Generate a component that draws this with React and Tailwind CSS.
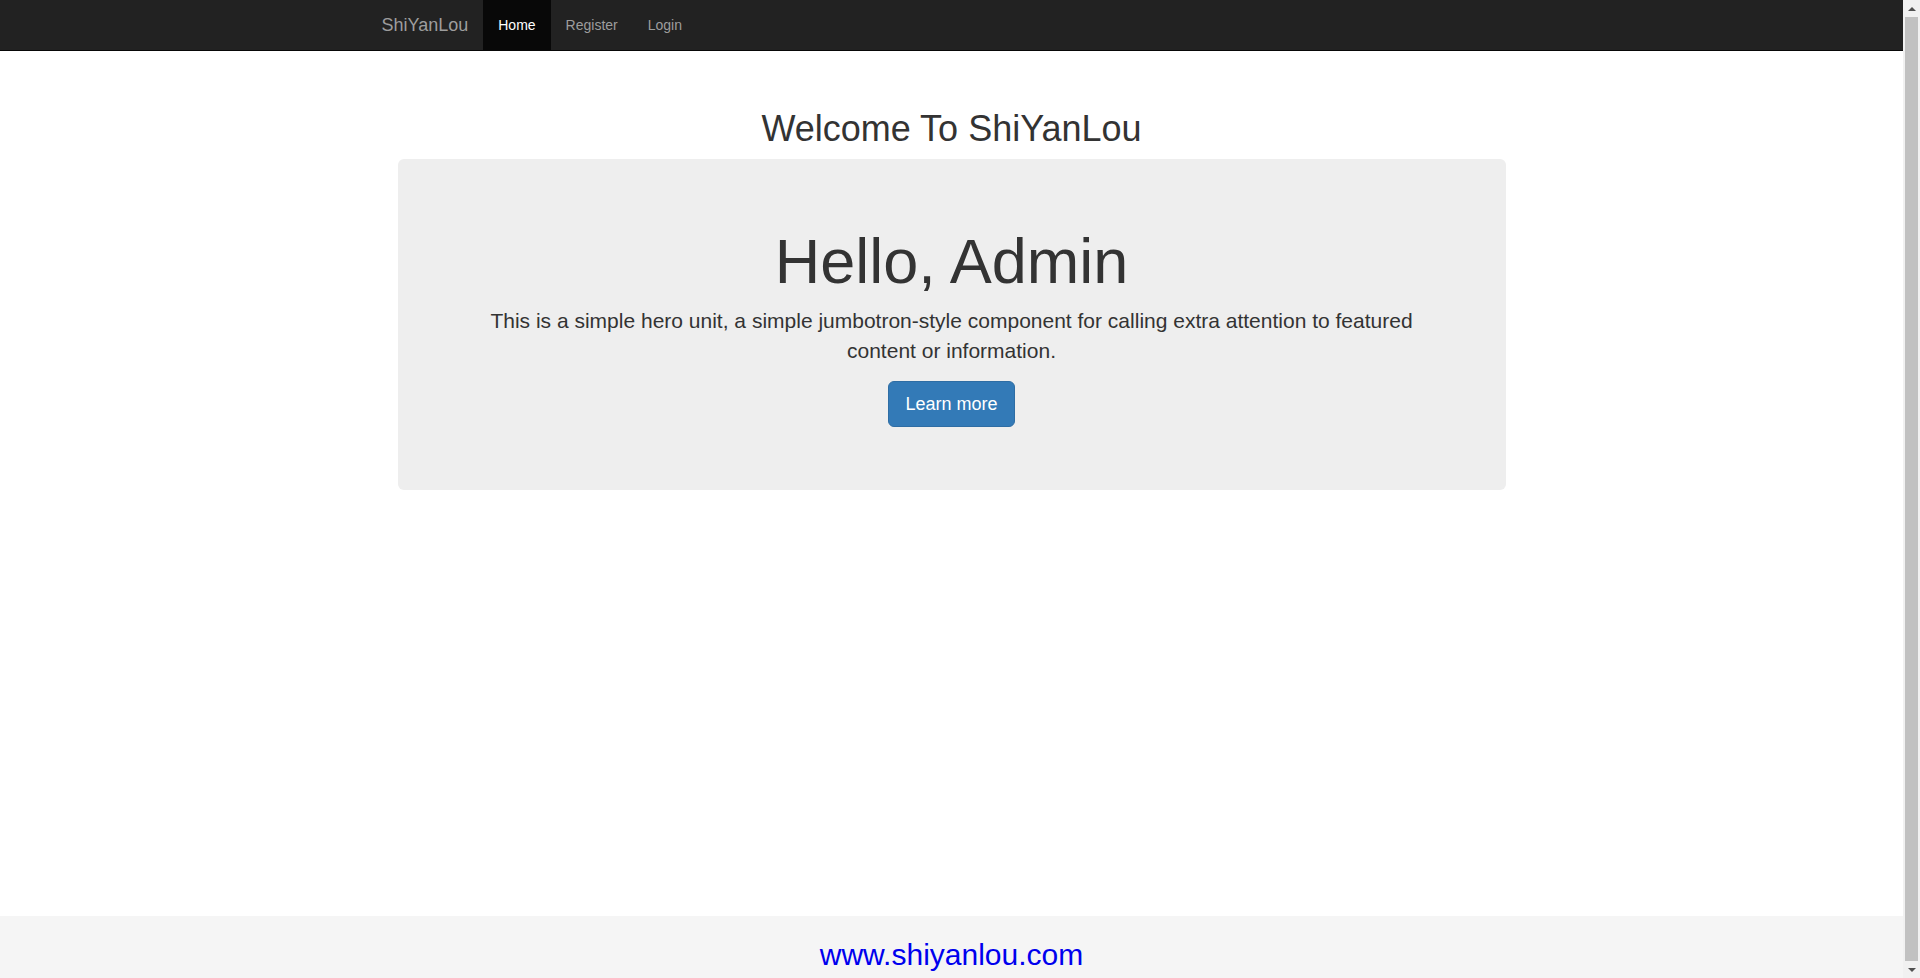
export default function App() {
  return (
    <div
      className="flex h-[978px] w-[1920px] overflow-hidden bg-white text-[#333]"
      style={{ fontFamily: '"Liberation Sans", Arial, sans-serif' }}
    >
      <div className="flex w-[1903px] flex-col">
        <nav className="h-[51px] shrink-0 border-b border-[#080808] bg-[#222]">
          <div className="mx-auto flex h-[50px] w-[1170px]">
            <a className="px-[15px] py-[15px] text-[18px] leading-[20px] text-[#9d9d9d]">ShiYanLou</a>
            <a className="bg-[#080808] px-[15px] py-[15px] text-[14px] leading-[20px] text-white">Home</a>
            <a className="px-[15px] py-[15px] text-[14px] leading-[20px] text-[#9d9d9d]">Register</a>
            <a className="px-[15px] py-[15px] text-[14px] leading-[20px] text-[#9d9d9d]">Login</a>
          </div>
        </nav>

        <main className="flex flex-1 flex-col items-center pt-[58px]">
          <h1 className="text-[36px] font-normal leading-[40px]">Welcome To ShiYanLou</h1>
          <div className="mt-[10px] flex w-[1108px] flex-col items-center rounded-[6px] bg-[#eee] px-[60px] pb-[48px] pt-[68px] text-center">
            <h1 className="text-[63px] font-normal leading-[69px]">Hello, Admin</h1>
            <p className="mt-[10px] text-[21px] font-normal leading-[30px]">
              This is a simple hero unit, a simple jumbotron-style component for calling extra attention to featured content or information.
            </p>
            <p className="mt-[15px] mb-[15px]">
              <a className="inline-block rounded-[6px] border border-[#2e6da4] bg-[#337ab7] px-[16px] py-[10px] text-[18px] leading-[24px] text-white">
                Learn more
              </a>
            </p>
          </div>
        </main>

        <footer className="h-[62px] shrink-0 bg-[#f5f5f5] pt-[19px] text-center">
          <span className="text-[30px] leading-[40px] text-[#0000ee]">www.shiyanlou.com</span>
        </footer>
      </div>

      <div className="flex w-[17px] shrink-0 flex-col bg-[#f1f1f1]">
        <div className="flex h-[17px] items-center justify-center">
          <div className="h-0 w-0 border-x-[4px] border-b-[4px] border-x-transparent border-b-[#505050]" />
        </div>
        <div className="mx-[2px] flex-1 bg-[#c1c1c1]" />
        <div className="flex h-[17px] items-center justify-center">
          <div className="h-0 w-0 border-x-[4px] border-t-[4px] border-x-transparent border-t-[#505050]" />
        </div>
      </div>
    </div>
  );
}
